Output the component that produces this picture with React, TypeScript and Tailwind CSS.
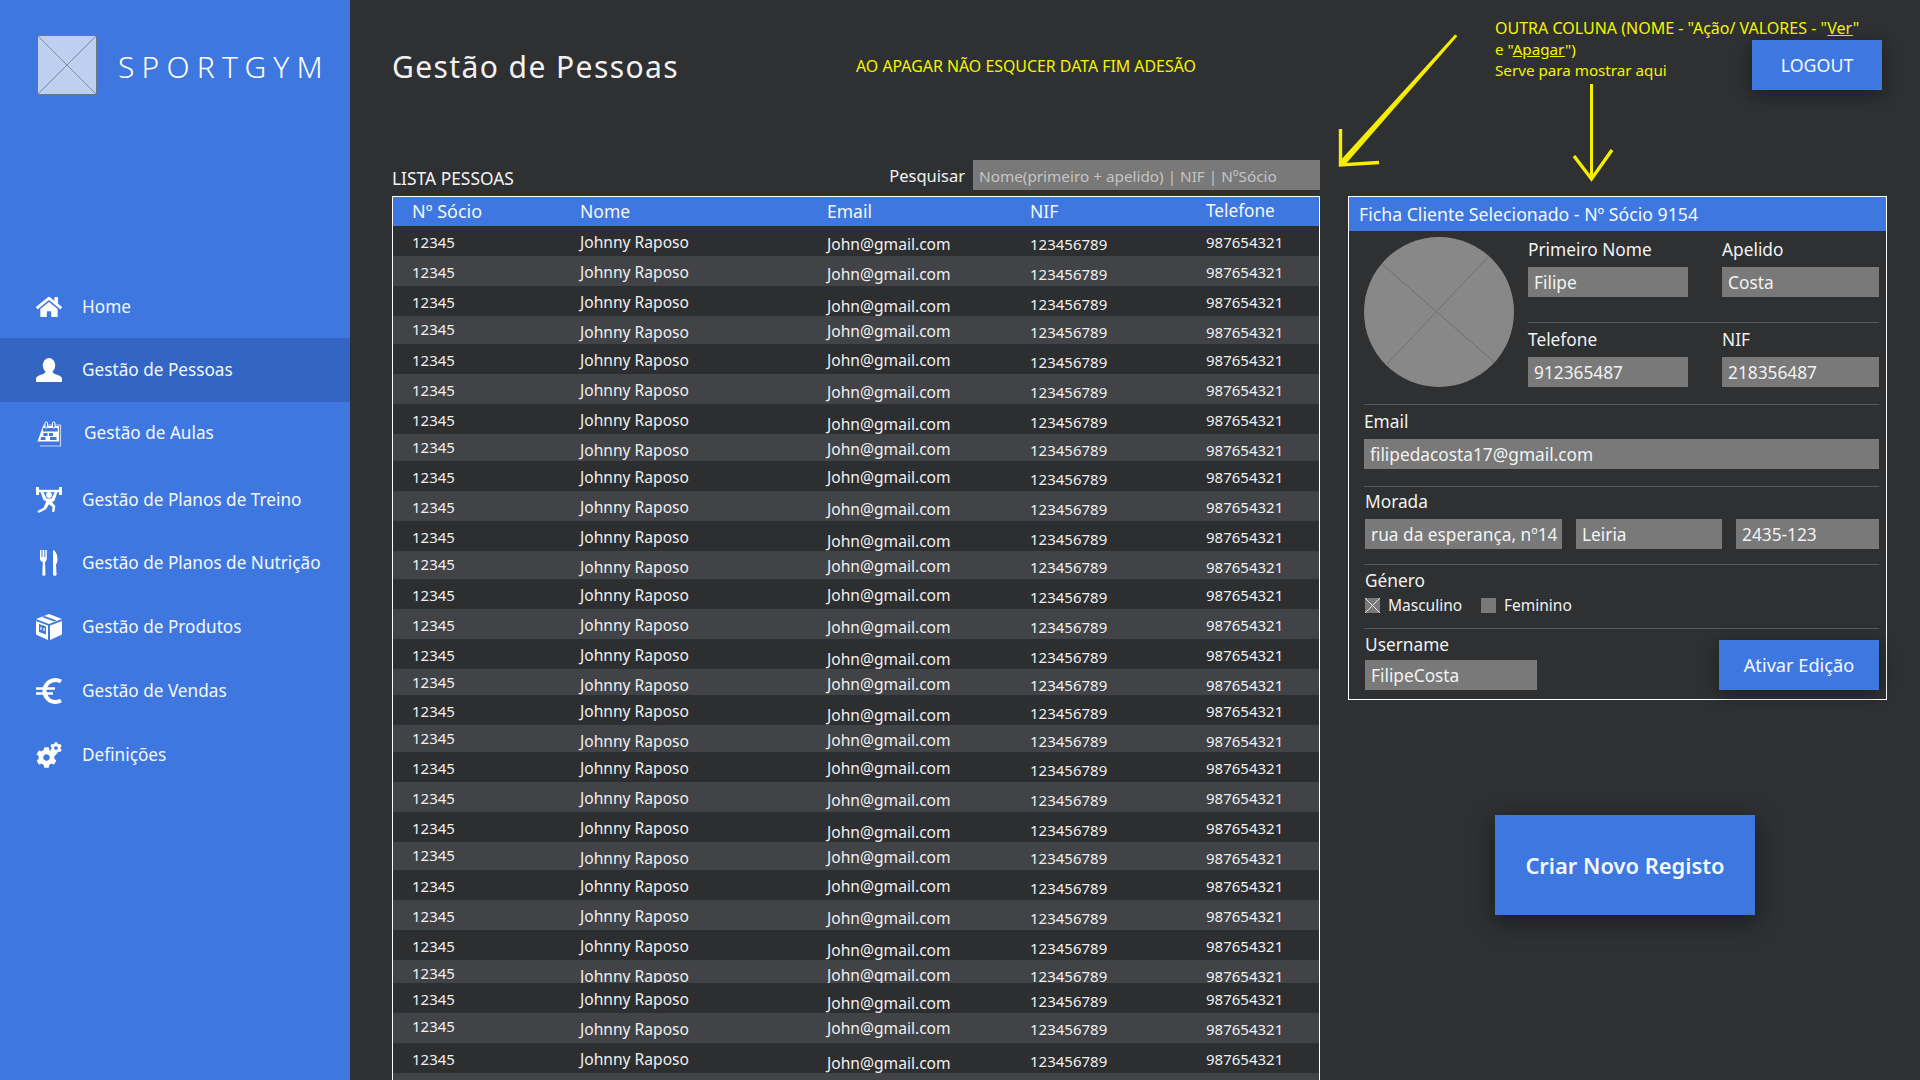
import React from "react";
import { FaHome, FaCog } from "react-icons/fa";

const FONT = "font-['Noto_Sans','Open_Sans',sans-serif]";

const PersonIcon = () => (
  <svg width="26" height="24" viewBox="0 0 26 24" fill="white">
    <ellipse cx="13" cy="7.5" rx="6.2" ry="7.5" />
    <path d="M0 24v-3.2c0-2 2-3 5-4 2.5-.8 4-1.6 4.5-3h7c.5 1.4 2 2.2 4.500 3 3 1 5 2 5 4V24z" />
  </svg>
);
const CalendarIcon = () => (
  <svg width="26" height="26" viewBox="0 0 26 26" fill="none">
    <path d="M7 4H24.500V25H4" stroke="#c3d5f7" strokeWidth="1.200" />
    <path d="M7 5H23V20.500H1.500z" fill="white" />
    <path d="M6.800 10.500h15v-3.500H7.200z" fill="#3e77e0" />
    <rect x="9" y="1" width="2.500" height="6" rx="1" fill="#3e77e0" stroke="white" strokeWidth="1" />
    <rect x="16.500" y="1" width="2.500" height="6" rx="1" fill="#3e77e0" stroke="white" strokeWidth="1" />
    <path d="M7.500 12h4v3h-4.400zM13 12h4v3h-4zM5 16h4.500v3H4.500zM14 16h6.500v3H14z" fill="#3e77e0" />
  </svg>
);
const LifterIcon = () => (
  <svg width="26" height="26" viewBox="0 0 26 26" fill="white">
    <rect x="0" y="0" width="3" height="8" />
    <rect x="23" y="0" width="3" height="8" />
    <rect x="3" y="2.800" width="20" height="2.400" />
    <path d="M4.500 5h2.700l3.300 6.500h5L18.800 5h2.700l-3.200 9-2.300 1 3.300 4-1 6-2.300-.2.600-4.800-3.600-2.700-3 5-7.500 3.700-1-2 6-3.200 2.400-5.300V14l-2.400-1z" />
    <circle cx="13" cy="8" r="2.900" />
  </svg>
);
const ForkKnifeIcon = () => (
  <svg width="18" height="26" viewBox="0 0 18 26" fill="white">
    <path d="M0 0h1.500v7h1V0h1.800v7h1V0h1.500v8.500c0 2-1 3-1.800 3.500l.5 12.500c0 1.800-3.200 1.800-3.200 0l.5-12.500C1 11.500 0 10.500 0 8.500z" />
    <path d="M13 0c3 1 4.500 5 4.500 9 0 3-.8 5-1.500 5.500l.6 10c0 1.800-3.600 1.800-3.600 0z" />
  </svg>
);
const BoxIcon = () => (
  <svg width="26" height="26" viewBox="0 0 26 26">
    <path d="M13 0l13 5-13 5L0 5z" fill="white" />
    <path d="M0 7l12 4.500V26L1 21c-.7-.3-1-1-1-2z" fill="white" />
    <path d="M26 7l-12 4.500V26l11-5c.7-.3 1-1 1-2z" fill="white" />
    <path d="M6 3l12 4.500 2.500-1L8.500 2zM3 10l7 2.600v8L3 18z" fill="#3e77e0" />
    <path d="M5 13v3M8 14v3" stroke="white" strokeWidth="1.200" />
  </svg>
);
const EuroIcon = () => (
  <svg width="26" height="26" viewBox="0 0 26 26" fill="none" stroke="white">
    <path d="M25 3.500C23 2.500 21.500 2 19.500 2 13.500 2 8.500 6.800 8.500 13s5 11 11 11c2 0 3.500-.5 5.500-1.500" strokeWidth="4" />
    <path d="M0 10.500h19M0 15.500h17" strokeWidth="2.600" />
  </svg>
);
const GearsIcon = () => (
  <span className="relative block w-[26px] h-[26px]">
    <FaCog size={21} color="white" className="absolute left-0 bottom-0" />
    <FaCog size={12} color="white" className="absolute right-0 top-0" />
  </span>
);

const nav = [
  { label: "Home", icon: <FaHome size={26} color="white" />, h: "h-[63px]" },
  { label: "Gestão de Pessoas", icon: <PersonIcon />, h: "h-[64px]", active: true },
  { label: "Gestão de Aulas", icon: <CalendarIcon />, h: "h-[64px]", shift: true },
  { label: "Gestão de Planos de Treino", icon: <LifterIcon />, h: "h-[67px]" },
  { label: "Gestão de Planos de Nutrição", icon: <ForkKnifeIcon />, h: "h-[60px]" },
  { label: "Gestão de Produtos", icon: <BoxIcon />, h: "h-[67px]" },
  { label: "Gestão de Vendas", icon: <EuroIcon />, h: "h-[62px]" },
  { label: "Definições", icon: <GearsIcon />, h: "h-[66px]" },
];

const rows: [string, number][] = [
  ["h-[30px]", 19], ["h-[30px]", 19], ["h-[30px]", 21], ["h-[28px]", 16], ["h-[30px]", 17], ["h-[30px]", 19],
  ["h-[30px]", 21], ["h-[27px]", 16], ["h-[30px]", 17], ["h-[30px]", 19], ["h-[30px]", 21], ["h-[28px]", 16],
  ["h-[30px]", 17], ["h-[30px]", 19], ["h-[30px]", 21], ["h-[26px]", 16], ["h-[30px]", 21], ["h-[27px]", 16],
  ["h-[30px]", 17], ["h-[30px]", 19], ["h-[30px]", 21], ["h-[28px]", 16], ["h-[30px]", 17], ["h-[30px]", 19],
  ["h-[30px]", 21], ["h-[23px]", 16], ["h-[30px]", 21], ["h-[30px]", 16], ["h-[30px]", 21], ["h-[30px]", 17],
];
const emailPad: Record<number, string> = { 16: "pt-[5px]", 17: "pt-[6px]", 19: "pt-[8px]", 21: "pt-[10px]" };

const COLS = "grid grid-cols-[168px_247px_203px_176px_1fr] pl-[19px]";

const Field = ({ children, className = "" }: { children: React.ReactNode; className?: string }) => (
  <div className={`h-[30px] bg-[#797979] pl-[6px] pt-[1px] flex items-center text-[17.300px] text-[#f2f2f2] whitespace-nowrap overflow-hidden ${className}`}>
    {children}
  </div>
);
const Label = ({ children, className = "" }: { children: React.ReactNode; className?: string }) => (
  <div className={`h-[24px] leading-[24px] text-[17.300px] text-[#f2f2f2] ${className}`}>{children}</div>
);
const Divider = ({ className = "" }: { className?: string }) => <div className={`h-px bg-[#57585b] ${className}`} />;

export default function App() {
  return (
    <div className={`relative flex h-screen w-full overflow-hidden bg-[#2f3032] ${FONT}`}>
      <aside className="w-[350px] shrink-0 bg-[#3e77e0] text-white">
        <div className="flex h-[275px] items-start pl-[37px] pt-[35px]">
          <svg width="60" height="60" viewBox="0 0 60 60" className="shrink-0">
            <rect x="0.500" y="0.500" width="59" height="59" fill="#bed0f0" stroke="#6d7686" />
            <path d="M0 0L60 60M60 0L0 60" stroke="#6d7686" strokeWidth="0.800" />
          </svg>
          <div className="ml-[21px] mt-[10px] text-[30px] leading-[44px] font-light tracking-[0.24em] whitespace-nowrap">SPORTGYM</div>
        </div>
        <nav>
          {nav.map((n) => (
            <div key={n.label} className={`flex items-center pl-[36px] ${n.h} ${n.active ? "bg-[#3366c2]" : ""}`}>
              <span className="flex w-[26px] justify-center">{n.icon}</span>
              <span className={`text-[17.200px] whitespace-nowrap text-[#f4f7fd] ${n.shift ? "ml-[22px] -mt-[2px]" : "ml-[20px]"}`}>{n.label}</span>
            </div>
          ))}
        </nav>
      </aside>

      <main className="flex-1 pl-[42px] min-w-0">
        <header className="flex h-[160px] items-start">
          <h1 className="w-[464px] mt-[46px] text-[30px] leading-[42px] tracking-[0.047em] text-[#f2f2f2] whitespace-nowrap">Gestão de Pessoas</h1>
          <div className="w-[639px] mt-[56px] text-[15.900px] leading-[20px] text-[#f5f500] whitespace-nowrap">AO APAGAR NÃO ESQUCER DATA FIM ADESÃO</div>
          <div className="w-[257px] mt-[18px] text-[15.200px] leading-[21px] text-[#f5f500] whitespace-nowrap">
            <div className="text-[16px]">OUTRA COLUNA (NOME - "Ação/ VALORES - "<u>Ver</u>"</div>
            <div>e "<u>Apagar</u>")</div>
            <div>Serve para mostrar aqui</div>
          </div>
          <button className="mt-[40px] h-[50px] w-[130px] bg-[#3e77e0] text-[17.800px] text-[#f4f7fd] shadow-[0_4px_18px_rgba(0,0,0,0.4)]">LOGOUT</button>
        </header>

        <div className="flex items-start">
          <section className="w-[928px] shrink-0">
            <div className="flex h-[30px] items-center">
              <div className="flex-1 pt-[6px] text-[17.400px] text-[#f2f2f2]">LISTA PESSOAS</div>
              <div className="mr-[8px] pt-[2px] text-[16.500px] leading-[24px] text-[#f2f2f2]">Pesquisar</div>
              <div className="flex h-[30px] w-[347px] items-center bg-[#797979] pl-[6px] pt-[2px] text-[15.300px] text-[#c4c4c4] whitespace-nowrap">Nome(primeiro + apelido) | NIF | NºSócio</div>
            </div>
            <div className="mt-[6px] h-[900px] border-x border-t border-white">
              <div className={`${COLS} h-[29px] items-center bg-[#3e77e0] text-[17.500px] text-[#f4f7fd]`}>
                <div className="text-[18px]">Nº Sócio</div>
                <div>Nome</div>
                <div className="-mt-[1px]">Email</div>
                <div>NIF</div>
                <div className="-mt-[1px] text-[17.200px]">Telefone</div>
              </div>
              {rows.map(([h, e], i) => {
                const short = e === 16;
                return (
                  <div key={i} className={`${COLS} ${h} overflow-hidden text-[15px] leading-[20px] text-[#f0f0f0] ${i % 2 ? "bg-[#414347]" : "bg-[#2d2e30]"}`}>
                    <div className={short ? "pt-[3px]" : "pt-[6px]"}>12345</div>
                    <div className="pt-[6px] text-[15.600px]">Johnny Raposo</div>
                    <div className={`text-[15.600px] ${emailPad[e]}`}>John@gmail.com</div>
                    <div className={short ? "pt-[6px]" : "pt-[8px]"}>123456789</div>
                    <div className="pt-[6px]">987654321</div>
                  </div>
                );
              })}
            </div>
          </section>

          <section className="ml-[28px] w-[539px] shrink-0 pt-[36px]">
            <div className="h-[504px] border border-white">
              <div className="flex h-[34px] items-center bg-[#3e77e0] pl-[10px] text-[17.700px] text-[#f4f7fd] whitespace-nowrap">Ficha Cliente Selecionado - Nº Sócio 9154</div>
              <div className="pl-[15px] pr-[7px]">
                <div className="flex">
                  <svg width="150" height="150" viewBox="0 0 150 150" className="mt-[6px] shrink-0">
                    <circle cx="75" cy="75" r="75" fill="#888888" />
                    <path d="M18 27L130 125M124 20L23 127" stroke="#6f6f6f" strokeWidth="1" />
                  </svg>
                  <div className="ml-[14px] flex-1">
                    <div className="grid grid-cols-[160px_157px] gap-x-[34px] pt-[7px]">
                      <Label>Primeiro Nome</Label>
                      <Label>Apelido</Label>
                      <Field className="mt-[5px]">Filipe</Field>
                      <Field className="mt-[5px]">Costa</Field>
                    </div>
                    <Divider className="mt-[25px]" />
                    <div className="grid grid-cols-[160px_157px] gap-x-[34px] pt-[5px]">
                      <Label>Telefone</Label>
                      <Label>NIF</Label>
                      <Field className="mt-[5px]">912365487</Field>
                      <Field className="mt-[5px]">218356487</Field>
                    </div>
                  </div>
                </div>
                <Divider className="mt-[17px]" />
                <Label className="mt-[5px]">Email</Label>
                <Field className="mt-[5px]">filipedacosta17@gmail.com</Field>
                <Divider className="mt-[17px]" />
                <Label className="mt-[3px] ml-[1px]">Morada</Label>
                <div className="mt-[5px] ml-[1px] grid grid-cols-[197px_146px_143px] gap-x-[14px]">
                  <Field>rua da esperança, nº14</Field>
                  <Field>Leiria</Field>
                  <Field>2435-123</Field>
                </div>
                <Divider className="mt-[15px]" />
                <Label className="mt-[4px] ml-[1px]">Género</Label>
                <div className="mt-[5px] ml-[1px] flex h-[15px] items-center text-[15.500px] text-[#f0f0f0]">
                  <svg width="15" height="15" viewBox="0 0 15 15" className="shrink-0">
                    <rect width="15" height="15" fill="#797979" />
                    <path d="M0 0L15 15M15 0L0 15" stroke="#e4e4e4" strokeWidth="1" />
                  </svg>
                  <span className="ml-[8px] w-[93px]">Masculino</span>
                  <span className="h-[15px] w-[15px] bg-[#797979]" />
                  <span className="ml-[8px]">Feminino</span>
                </div>
                <Divider className="mt-[15px]" />
                <div className="flex items-start justify-between">
                  <div className="ml-[1px]">
                    <Label className="mt-[4px]">Username</Label>
                    <Field className="mt-[3px] w-[172px] pl-[4px]">FilipeCosta</Field>
                  </div>
                  <button className="mt-[11px] h-[50px] w-[160px] bg-[#3e77e0] pt-[1px] text-[18.200px] text-[#f4f7fd] shadow-[0_4px_18px_rgba(0,0,0,0.4)]">Ativar Edição</button>
                </div>
              </div>
            </div>
            <button className="ml-[147px] mt-[115px] block h-[100px] w-[260px] bg-[#3e77e0] pt-[2px] text-[21.900px] font-semibold text-[#f4f7fd] shadow-[0_6px_24px_rgba(0,0,0,0.45)]">Criar Novo Registo</button>
          </section>
        </div>
      </main>

      <svg width="320" height="160" viewBox="0 0 320 160" fill="none" className="pointer-events-none absolute left-[1320px] top-[30px]">
        <path d="M135 4.500L137.500 6 24 136 19 132z" fill="#f6ee00" />
        <path d="M20.500 99V135L59 132.500" stroke="#f6ee00" strokeWidth="3.400" />
        <path d="M271.500 54V146" stroke="#f6ee00" strokeWidth="3" />
        <path d="M254 126L271.500 149 292 120" stroke="#f6ee00" strokeWidth="3.400" />
      </svg>
    </div>
  );
}
